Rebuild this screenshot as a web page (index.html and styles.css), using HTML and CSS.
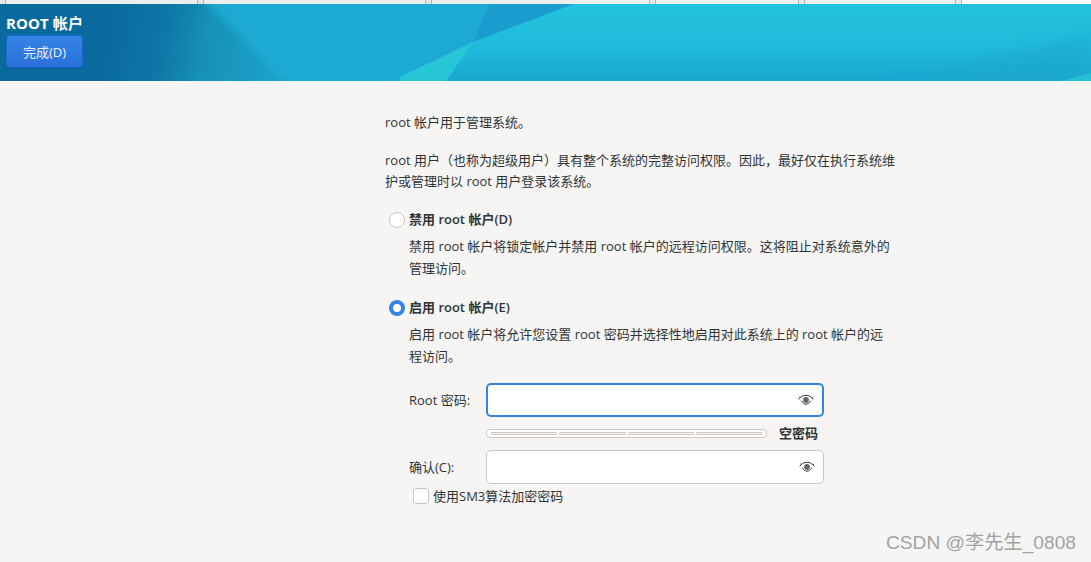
FILE: index.html
```html
<!DOCTYPE html>
<html lang="zh-CN">
<head>
<meta charset="utf-8">
<title>ROOT 帐户</title>
<link rel="stylesheet" href="styles.css">
</head>
<body>
<div class="tabs">
  <span class="tab t1"></span><span class="tab t2"></span><span class="tab t3"></span><span class="tab t4"></span><span class="tab t5"></span><span class="tab t6"></span>
</div>
<header class="header">
  <svg class="header-art" viewBox="0 0 1091 77" preserveAspectRatio="none" aria-hidden="true">
    <defs>
      <linearGradient id="base" gradientUnits="userSpaceOnUse" x1="110" y1="20" x2="270" y2="50">
        <stop offset="0" stop-color="#0a6a9e"/>
        <stop offset=".35" stop-color="#0e78a8"/>
        <stop offset=".6" stop-color="#1790b6"/>
        <stop offset="1" stop-color="#1c9fc8"/>
      </linearGradient>
      <linearGradient id="light" x1="0" y1="0" x2="0" y2="1">
        <stop offset="0" stop-color="#22c3dd"/>
        <stop offset=".55" stop-color="#20bbdb"/>
        <stop offset="1" stop-color="#19a8cf"/>
      </linearGradient>
      <filter id="soft" x="-20%" y="-20%" width="140%" height="140%"><feGaussianBlur stdDeviation="6"/></filter>
      <filter id="softer" x="-20%" y="-50%" width="140%" height="200%"><feGaussianBlur stdDeviation="5"/></filter>
    </defs>
    <rect width="1091" height="77" fill="url(#base)"/>
    <polygon points="200,-8 1120,-8 1120,90 290,84" fill="#1daad2" filter="url(#softer)"/>
    <polygon points="490,0 574,0 473,38" fill="#1a9ccf"/>
    <polygon points="574,0 1091,0 1091,77 400,77 400,73 473,38" fill="url(#light)"/>
    <polygon points="400,73 473,38 446,77 400,77" fill="#27c6d6"/>
    <polygon points="893,77 1091,30 1091,77" fill="#1aa5cc" opacity=".5" filter="url(#soft)"/>
    <polygon points="1060,77 1091,69 1091,77" fill="#25bfd8"/>
  </svg>
  <h1 class="title">ROOT 帐户</h1>
  <button class="done" type="button">完成(D)</button>
</header>
<main class="content">
  <p class="lead">root 帐户用于管理系统。</p>
  <p class="desc">root 用户（也称为超级用户）具有整个系统的完整访问权限。因此，最好仅在执行系统维护或管理时以 root 用户登录该系统。</p>

  <div class="option first">
    <span class="radio"></span>
    <span class="option-label">禁用 root 帐户(D)</span>
  </div>
  <p class="option-text">禁用 root 帐户将锁定帐户并禁用 root 帐户的远程访问权限。这将阻止对系统意外的管理访问。</p>

  <div class="option second">
    <span class="radio checked"></span>
    <span class="option-label">启用 root 帐户(E)</span>
  </div>
  <p class="option-text">启用 root 帐户将允许您设置 root 密码并选择性地启用对此系统上的 root 帐户的远程访问。</p>

  <form class="form">
    <label class="field-label">Root 密码:</label>
    <div class="entry focused">
      <svg class="eye" viewBox="0 0 16 12" aria-hidden="true"><path d="M.7 5.4C2.6 2.7 5 1.3 8 1.3s5.4 1.4 7.3 4.1"/><path d="M2.3 3.7 1.2 2.6M14 3.9l1-1.1"/><path d="M3.2 6.6C4.4 8.9 6 10.2 8 10.2s3.6-1.3 4.8-3.6"/><circle cx="8" cy="6" r="2.9" class="iris"/></svg>
    </div>
    <div class="strength-row">
      <div class="meter"><span></span><span></span><span></span><span></span></div>
      <span class="strength">空密码</span>
    </div>
    <label class="field-label">确认(C):</label>
    <div class="entry">
      <svg class="eye" viewBox="0 0 16 12" aria-hidden="true"><path d="M.7 5.4C2.6 2.7 5 1.3 8 1.3s5.4 1.4 7.3 4.1"/><path d="M2.3 3.7 1.2 2.6M14 3.9l1-1.1"/><path d="M3.2 6.6C4.4 8.9 6 10.2 8 10.2s3.6-1.3 4.8-3.6"/><circle cx="8" cy="6" r="2.9" class="iris"/></svg>
    </div>
  </form>
  <div class="check-row">
    <span class="checkbox"></span>
    <span>使用SM3算法加密密码</span>
  </div>
</main>
<div class="watermark">CSDN @李先生_0808</div>
</body>
</html>
```

FILE: styles.css
```css
* { box-sizing: border-box; }
html, body { margin: 0; height: 562px; overflow: hidden; }
body {
  position: relative;
  background: #f6f5f4;
  color: #2e3436;
  font-family: "Open Sans", "Noto Sans CJK SC", sans-serif;
  font-size: 13px;
}
.tabs { display: flex; gap: 5px; height: 4px; padding-left: 5px; background: #e4e5e7; }
.tab { background: #eceded; border: solid #b4b4b4; border-width: 0 1px; }
.t1 { width: 193px; }
.t2 { width: 223px; }
.t3 { width: 219px; }
.t4 { width: 144px; }
.t5 { width: 152px; }
.t6 { flex: 1; background: #fff; border-right: 0; }
.header {
  position: relative;
  height: 77px;
  padding: 10px 6px 0;
  overflow: hidden;
}
.header-art { position: absolute; inset: 0; width: 100%; height: 100%; display: block; }
.title {
  position: relative;
  margin: 0;
  color: #fff;
  font-size: 15px;
  font-weight: 700;
  letter-spacing: .1px;
  line-height: 18px;
  font-family: "Open Sans", "Noto Sans CJK SC", sans-serif;
  white-space: nowrap;
}
.done {
  position: relative;
  display: block;
  width: 77px;
  height: 33px;
  margin-top: 3px;
  padding: 0;
  border: 1px solid #1b6acb;
  border-radius: 4px;
  background: linear-gradient(#3584e4, #2a70dc);
  color: #e8f0fb;
  font: 13px "Open Sans", "Noto Sans CJK SC", sans-serif;
  box-shadow: 0 1px 1px rgba(0,0,0,.12);
}
.content { width: 515px; margin-left: 385px; padding-top: 31px; line-height: 21px; }
p { margin: 0; }
.lead { margin-bottom: 17px; }
.option { display: flex; align-items: center; height: 21px; font-weight: 600; }
.option.first { margin-top: 17px; }
.option.second { margin-top: 18px; }
.radio {
  flex: none;
  width: 16px;
  height: 16px;
  margin: 0 4px;
  border: 1px solid #cdc7c2;
  border-radius: 50%;
  background: #fff;
}
.radio.checked { border: 4.5px solid #3584e4; }
.option-text { width: 484px; margin: 6px 0 0 24px; line-height: 21.5px; }
.form {
  display: grid;
  grid-template-columns: 77px 338px;
  margin: 16px 0 0 24px;
  align-items: center;
}
.field-label { white-space: nowrap; }
.entry {
  position: relative;
  height: 34px;
  border: 1px solid #cdc7c2;
  border-radius: 5px;
  background: #fff;
}
.entry.focused { border: 2px solid #3584e4; }
.eye {
  position: absolute;
  top: 50%;
  right: 8px;
  width: 16px;
  height: 12px;
  margin-top: -6px;
  fill: none;
  stroke: #3b3f41;
  stroke-width: 1;
}
.iris { fill: #3b3f41; stroke: none; opacity: .8; }
.strength-row {
  grid-column: 2;
  display: flex;
  align-items: center;
  height: 33px;
}
.meter {
  display: flex;
  gap: 2px;
  width: 281px;
  height: 9px;
  padding: 2px 4px;
  border: 1px solid #cdc7c2;
  border-radius: 4px;
  background: #fff;
}
.meter span { flex: 1; background: #f6f5f4; border: 1px solid #cdc7c2; border-radius: 1px; }
.strength { margin-left: 12px; font-weight: 600; }
.check-row { display: flex; align-items: center; gap: 4px; height: 22px; margin: 1px 0 0 28px; }
.checkbox {
  flex: none;
  width: 16px;
  height: 16px;
  border: 1px solid #cdc7c2;
  border-radius: 3px;
  background: #fff;
}
.watermark {
  position: absolute;
  right: 15px;
  top: 530px;
  color: #a3a3a3;
  font: 19.2px/26px "Liberation Sans", "Noto Sans CJK SC", sans-serif;
  white-space: nowrap;
}
```
